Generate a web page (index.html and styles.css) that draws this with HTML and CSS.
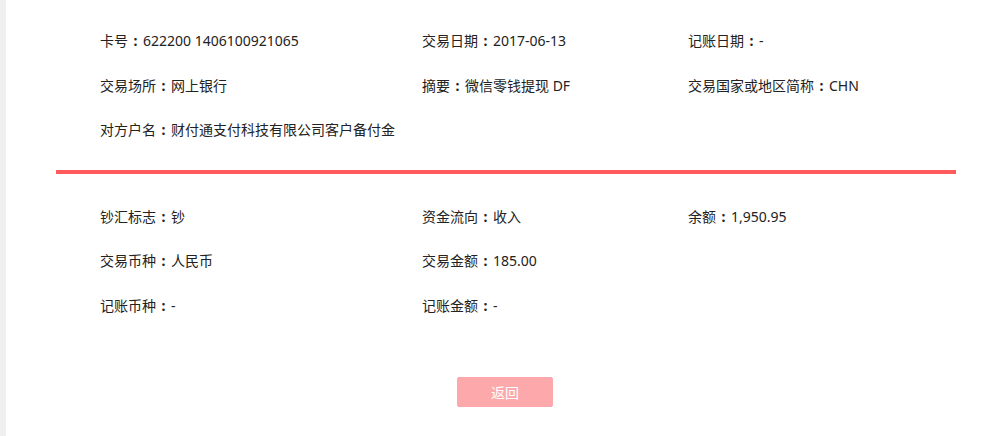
FILE: index.html
```html
<!DOCTYPE html>
<html lang="zh-CN">
<head>
  <meta charset="UTF-8">
  <title>交易明细</title>
  <link rel="stylesheet" href="styles.css">
</head>
<body>
  <div class="detail-page">
    <!-- 交易信息 -->
    <div class="info-grid">
      <div class="info-item">卡号<span class="colon">:</span>622200 1406100921065</div>
      <div class="info-item">交易日期<span class="colon">:</span>2017-06-13</div>
      <div class="info-item">记账日期<span class="colon">:</span>-</div>
      <div class="info-item">交易场所<span class="colon">:</span>网上银行</div>
      <div class="info-item">摘要<span class="colon">:</span>微信零钱提现 DF</div>
      <div class="info-item">交易国家或地区简称<span class="colon">:</span>CHN</div>
      <div class="info-item">对方户名<span class="colon">:</span>财付通支付科技有限公司客户备付金</div>
    </div>
    <div class="divider"></div>
    <!-- 金额信息 -->
    <div class="info-grid">
      <div class="info-item">钞汇标志<span class="colon">:</span>钞</div>
      <div class="info-item">资金流向<span class="colon">:</span>收入</div>
      <div class="info-item">余额<span class="colon">:</span>1,950.95</div>
      <div class="info-item">交易币种<span class="colon">:</span>人民币</div>
      <div class="info-item">交易金额<span class="colon">:</span>185.00</div>
      <div class="info-item"></div>
      <div class="info-item">记账币种<span class="colon">:</span>-</div>
      <div class="info-item">记账金额<span class="colon">:</span>-</div>
    </div>
    <div class="actions">
      <button class="back-button">返回</button>
    </div>
  </div>
</body>
</html>
```

FILE: styles.css
```css
body {
  margin: 0;
  padding: 0;
  background-color: #f0f0f0;
  font-family: "Noto Sans", "Noto Sans CJK SC", sans-serif;
  font-size: 14px;
  color: #222;
}

.detail-page {
  margin-left: 6px;
  height: 436px;
  background-color: #fff;
  padding: 19px 0 0 50px;
  box-sizing: border-box;
}

.info-grid {
  display: grid;
  grid-template-columns: 322px 266px auto;
  grid-auto-rows: 44.5px;
  padding-left: 44px;
  width: 900px;
  box-sizing: border-box;
}
.info-grid + .divider {
  margin-top: 17px;
}
.divider + .info-grid {
  padding-top: 21px;
}

.info-item {
  line-height: 44.5px;
  height: 44.5px;
  white-space: nowrap;
}
.info-item .colon {
  display: inline-block;
  width: 15px;
  text-align: center;
  font-weight: bold;
}

.divider {
  width: 900px;
  height: 4px;
  background-color: #ff5a5c;
}

.actions {
  width: 900px;
  padding-top: 49px;
  padding-left: 401px;
  box-sizing: border-box;
}

.back-button {
  width: 96px;
  height: 30px;
  border: none;
  border-radius: 2px;
  background-color: #fda9ab;
  color: #fff;
  font-family: "Noto Sans CJK SC", sans-serif;
  font-size: 14px;
  cursor: pointer;
}
```
